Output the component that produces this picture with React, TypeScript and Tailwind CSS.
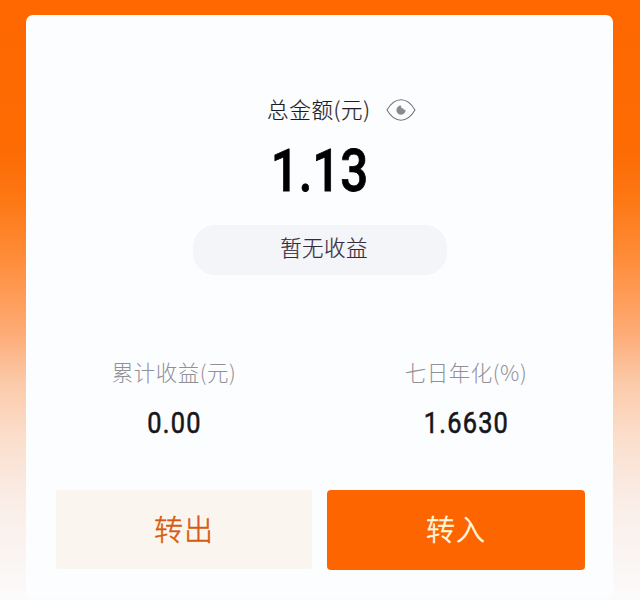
import type { ReactNode } from "react";

const cjk = "font-['Noto_Sans_CJK_SC',sans-serif] whitespace-nowrap";

function Figure({ children, className }: { children: ReactNode; className: string }) {
  return <div className={`font-[Roboto,sans-serif] whitespace-nowrap ${className}`}>{children}</div>;
}

function EyeIcon() {
  return (
    <svg width="30" height="24" viewBox="0 0 30 24" fill="none">
      <path d="M1 12C5 5.200 10 1.800 15 1.800s10 3.400 14 10.200c-4 6.800-9 10.200-14 10.200S5 18.800 1 12Z" stroke="#77757c" strokeWidth="1.1" strokeLinejoin="round" />
      <path d="M15 7.500a4.600 4.600 0 1 0 4.600 4.300h-1.800l-.5-1.300-1.900-.5Z" fill="#8b8990" />
    </svg>
  );
}

function Stat({ label, value, className }: { label: string; value: string; className: string }) {
  return (
    <div className={`flex flex-col items-center ${className}`}>
      <div className={`${cjk} h-8 text-[21.5px] leading-8 font-light tracking-[0.5px] text-[#938f96]`}>{label}</div>
      <Figure className="mt-[19px] h-8 scale-x-[0.86] pl-px text-[29.5px] leading-8 tracking-[1.4px] text-[#171519] [-webkit-text-stroke:0.6px_#171519]">{value}</Figure>
    </div>
  );
}

export default function App() {
  return (
    <main className="h-[600px] w-[640px] overflow-hidden bg-[linear-gradient(180deg,#ff6700_0px,#fd6b03_150px,#fd7814_200px,#ff8d3a_260px,#fdac78_335px,#fbcbab_385px,#fbdfcd_440px,#faece5_497px,#faf5f3_555px,#fcfbfb_600px)] pt-[15px] pl-[26px]">
      <section className="flex h-[584px] w-[587px] flex-col rounded-[7px] bg-[#fcfdff]">
        <div className="mt-[78px] flex h-8 items-center pl-[241px]">
          <div className={`${cjk} text-[21.5px] leading-8 font-light tracking-[0.7px] text-[#1f1c24] [-webkit-text-stroke:0.2px_#1f1c24]`}>总金额(元)</div>
          <div className="mt-0.5 ml-[15px]"><EyeIcon /></div>
        </div>
        <div className="mt-[14px] flex h-16 justify-center">
          <Figure className="scale-x-[0.82] text-[60px] leading-[64px] font-medium text-black [-webkit-text-stroke:0.8px_black]">1.13</Figure>
        </div>
        <div className="mt-[22px] ml-[167px] flex h-[50px] w-[254px] items-center justify-center rounded-[22px] bg-[#f4f5f9]">
          <span className={`${cjk} pb-1.5 pl-2 text-[21.5px] leading-8 font-light tracking-[0.4px] text-[#332c3c] [-webkit-text-stroke:0.2px_#332c3c]`}>暂无收益</span>
        </div>
        <div className="mt-[81px] flex h-[84px] pl-[43px]">
          <Stat label="累计收益(元)" value="0.00" className="w-[210px]" />
          <Stat label="七日年化(%)" value="1.6630" className="ml-[82px] w-[210px]" />
        </div>
        <div className="mt-[50px] flex gap-[15px] pl-[30px]">
          <button className={`${cjk} h-[79px] w-[256px] rounded-[3px] bg-[#fbf5f0] pb-0.5 text-[29px] font-light tracking-[1px] text-[#d75a0c] [-webkit-text-stroke:0.5px_#d75a0c]`}>转出</button>
          <button className={`${cjk} h-20 w-[258px] rounded-[4px] bg-[#fc6500] pb-0.5 text-[29px] font-light tracking-[1px] text-[#fff8dc] [-webkit-text-stroke:0.6px_#fff8dc]`}>转入</button>
        </div>
      </section>
    </main>
  );
}
